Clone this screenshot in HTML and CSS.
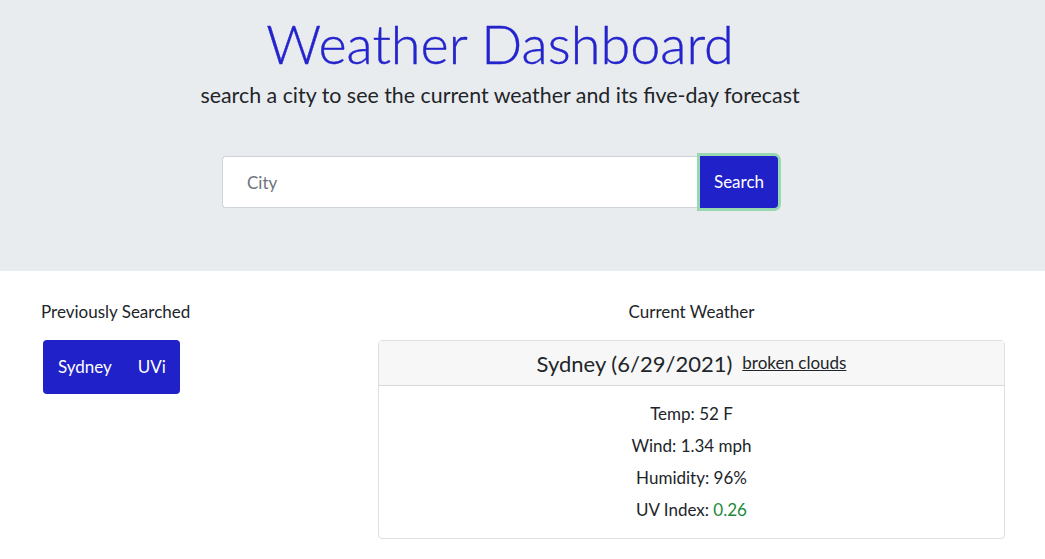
FILE: index.html
```html
<!DOCTYPE html>
<html lang="en">
<head>
<meta charset="utf-8">
<title>Weather Dashboard</title>
<link rel="stylesheet" href="styles.css">
</head>
<body>
<header class="hero">
  <div class="hero-inner">
    <h1 class="title">Weather Dashboard</h1>
    <p class="lead">search a city to see the current weather and its five-day forecast</p>
    <form class="search">
      <input class="search-input" type="text" placeholder="City">
      <button class="search-btn" type="button">Search</button>
    </form>
  </div>
</header>
<main class="content">
  <section class="history">
    <h2 class="section-label">Previously Searched</h2>
    <button class="city-btn" type="button"><span>Sydney</span><span>UVi</span></button>
  </section>
  <section class="current">
    <h2 class="section-label center">Current Weather</h2>
    <div class="card">
      <div class="card-header">
        <span class="card-title">Sydney (6/29/2021)</span>
        <a class="desc" href="#">broken clouds</a>
      </div>
      <div class="card-body">
        <p>Temp: 52 F</p>
        <p>Wind: 1.34 mph</p>
        <p>Humidity: 96%</p>
        <p>UV Index: <span class="uv">0.26</span></p>
      </div>
    </div>
  </section>
</main>
</body>
</html>
```

FILE: styles.css
```css
* { box-sizing: border-box; }
html, body { margin: 0; padding: 0; }
body {
  font-family: Lato, "Open Sans", sans-serif;
  color: #212529;
  background: #fff;
  font-size: 16px;
  line-height: 1.5;
}
.hero {
  background: #e9ecef;
  height: 271px;
  padding-top: 14px;
}
.hero-inner {
  width: 1000px;
  display: flex;
  flex-direction: column;
  align-items: center;
}
.title {
  margin: 0;
  font-size: 54px;
  font-weight: 300;
  line-height: 60px;
  color: #2424cc;
  -webkit-text-stroke: 0.4px #2424cc;
}
.lead {
  margin: 6px 0 0;
  font-size: 21.4px;
  font-weight: 400;
  line-height: 30px;
}
.search {
  margin-top: 46px;
  display: flex;
  width: 556px;
}
.search-input {
  flex: 1;
  height: 52px;
  border: 1px solid #ced4da;
  border-right: none;
  border-radius: 4px 0 0 4px;
  padding: 0 24px;
  font: inherit;
  font-size: 17px;
  color: #495057;
  background: #fff;
}
.search-input::placeholder { color: #6c757d; }
.search-btn {
  width: 78px;
  height: 52px;
  border: none;
  border-radius: 0 4px 4px 0;
  background: #2121c9;
  color: #fff;
  font: inherit;
  font-size: 17px;
  box-shadow: 0 0 0 3px #98d8b0;
}
.content {
  display: grid;
  grid-template-columns: 337px 627px;
  padding: 29px 0 0 41px;
}
.section-label {
  margin: 0 0 16px;
  font-size: 17px;
  font-weight: 400;
  line-height: 24px;
}
.section-label.center { text-align: center; }
.city-btn {
  display: flex;
  gap: 26px;
  margin-left: 2px;
  padding: 0 14px 0 15px;
  height: 54px;
  align-items: center;
  background: #2121c9;
  color: #fff;
  border: none;
  border-radius: 4px;
  font: inherit;
  font-size: 17px;
}
.card {
  border: 1px solid rgba(0,0,0,.125);
  border-radius: 4px;
}
.card-header {
  background: #f7f7f7;
  border-bottom: 1px solid rgba(0,0,0,.125);
  height: 45px;
  display: flex;
  align-items: center;
  justify-content: center;
  gap: 10px;
}
.card-title { font-size: 22px; }
.desc {
  color: #212529;
  text-decoration: underline;
  font-size: 17px;
}
.card-body {
  padding: 12px 0 12px;
  text-align: center;
}
.card-body p {
  margin: 0;
  line-height: 32px;
  font-size: 17px;
}
.uv { color: #1b8a3c; }
```
